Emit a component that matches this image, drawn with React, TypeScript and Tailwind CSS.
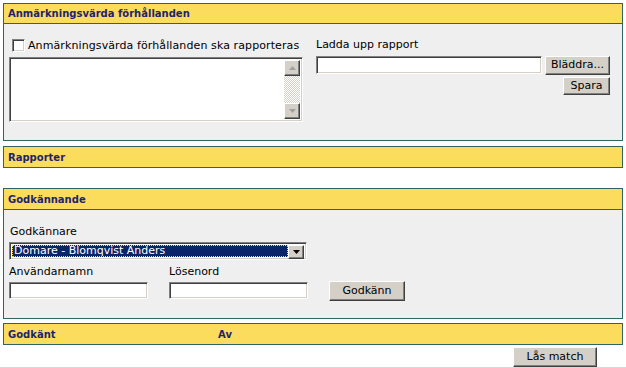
import React from "react";

const font = { fontFamily: '"DejaVu Sans", Verdana, sans-serif' };

function Header({ children, h = "h-[20px]" }: { children: React.ReactNode; h?: string }) {
  return (
    <div className={h + " bg-[#fcdc5c] flex items-center pl-[4px] text-[10px] font-bold text-[#1c2470]"}>
      {children}
    </div>
  );
}

function Btn({ children, className = "" }: { children: React.ReactNode; className?: string }) {
  return (
    <div
      className={
        "bg-[#d4d0c8] border border-t-white border-l-white border-r-[#404040] border-b-[#404040] shadow-[inset_-1px_-1px_0_#808080] flex items-center justify-center text-[11px] text-black " +
        className
      }
    >
      {children}
    </div>
  );
}

function Input({ className = "" }: { className?: string }) {
  return (
    <div
      className={
        "bg-white border border-t-[#808080] border-l-[#808080] border-r-white border-b-white shadow-[inset_1px_1px_0_#404040,inset_-1px_-1px_0_#d4d0c8] " +
        className
      }
    />
  );
}

function ArrowBtn({ up }: { up: boolean }) {
  return (
    <div className="w-[16px] h-[16px] bg-[#d4d0c8] border border-t-white border-l-white border-r-[#404040] border-b-[#404040] shadow-[inset_-1px_-1px_0_#808080] flex items-center justify-center">
      <svg width="7" height="4" viewBox="0 0 7 4">
        {up ? <path d="M3.5 0 L7 4 L0 4 Z" fill="#a0a0a0" /> : <path d="M0 0 L7 0 L3.5 4 Z" fill="#a0a0a0" />}
      </svg>
    </div>
  );
}

export default function App() {
  return (
    <div className="w-[626px] h-[368px] bg-white text-black overflow-hidden" style={font}>
      <div className="px-[3px] pt-[3px]">
        {/* Section 1 */}
        <div className="border border-[#2f6464] bg-[#efefef]">
          <div className="border-b border-[#2f6464]">
            <Header h="h-[19px]">Anmärkningsvärda förhållanden</Header>
          </div>
          <div className="h-[116px] flex pl-[5px] pt-[15px]">
            <div className="w-[294px] flex flex-col">
              <div className="flex items-center h-[13px] pl-[3px] gap-[3px]">
                <div className="w-[13px] h-[13px] bg-white border border-t-[#808080] border-l-[#808080] border-r-white border-b-white shadow-[inset_1px_1px_0_#404040,inset_-1px_-1px_0_#d4d0c8]" />
                <span className="text-[11px] leading-[13px] tracking-[0.1px]">Anmärkningsvärda förhållanden ska rapporteras</span>
              </div>
              <div className="mt-[5px] h-[65px] bg-white border border-t-[#808080] border-l-[#808080] border-r-white border-b-white shadow-[inset_1px_1px_0_#404040,inset_-1px_-1px_0_#d4d0c8] flex justify-end p-[2px]">
                <div className="w-[16px] flex flex-col justify-between bg-[repeating-conic-gradient(#d4d0c8_0_25%,#ffffff_0_50%)] bg-[length:2px_2px]">
                  <ArrowBtn up />
                  <ArrowBtn up={false} />
                </div>
              </div>
            </div>
            <div className="ml-[13px] w-[294px] flex flex-col">
              <div className="text-[11px] leading-[13px] h-[13px] -mt-[1px]">Ladda upp rapport</div>
              <div className="mt-[5px] flex gap-[3px]">
                <Input className="w-[226px] h-[18px]" />
                <Btn className="w-[65px] h-[19px]">Bläddra...</Btn>
              </div>
              <div className="flex justify-end mt-[2px]">
                <Btn className="w-[47px] h-[18px]">Spara</Btn>
              </div>
            </div>
          </div>
        </div>

        {/* Rapporter */}
        <div className="mt-[5px] border border-[#2f6464]">
          <Header>Rapporter</Header>
        </div>

        {/* Godkännande */}
        <div className="mt-[20px] border border-[#2f6464] bg-[#efefef]">
          <div className="border-b border-[#2f6464]">
            <Header>Godkännande</Header>
          </div>
          <div className="h-[108px] pl-[5px] pt-[15px] flex flex-col">
            <div className="text-[11px] leading-[13px] pl-[1px]">Godkännare</div>
            <div className="mt-[4px] w-[298px] h-[18px] bg-white border border-t-[#808080] border-l-[#808080] border-r-white border-b-white shadow-[inset_1px_1px_0_#404040,inset_-1px_-1px_0_#d4d0c8] flex p-[2px]">
              <div className="flex-1 bg-[#0a246a] text-white text-[11px] leading-[12px] pl-[2px] outline-1 outline-dotted outline-[#fcdc5c] -outline-offset-1 flex items-center">
                Domare - Blomqvist Anders
              </div>
              <div className="w-[16px] h-[14px] bg-[#d4d0c8] border border-t-white border-l-white border-r-[#404040] border-b-[#404040] shadow-[inset_-1px_-1px_0_#808080] flex items-center justify-center">
                <svg width="7" height="4" viewBox="0 0 7 4">
                  <path d="M0 0 L7 0 L3.5 4 Z" fill="#000" />
                </svg>
              </div>
            </div>
            <div className="flex mt-[5px]">
              <div className="w-[160px] flex flex-col">
                <div className="text-[11px] leading-[13px]">Användarnamn</div>
                <Input className="mt-[4px] w-[139px] h-[17px]" />
              </div>
              <div className="w-[160px] flex flex-col">
                <div className="text-[11px] leading-[13px]">Lösenord</div>
                <Input className="mt-[4px] w-[139px] h-[17px]" />
              </div>
              <div className="flex items-end">
                <Btn className="w-[76px] h-[20px] -mb-[2px]">Godkänn</Btn>
              </div>
            </div>
          </div>
        </div>

        {/* Godkänt */}
        <div className="mt-[4px] border border-[#2f6464]">
          <div className="h-[20px] bg-[#fcdc5c] flex items-center pl-[4px] text-[10px] font-bold text-[#1c2470]">
            <span className="w-[210px]">Godkänt</span>
            <span>Av</span>
          </div>
        </div>

        <div className="flex justify-end pr-[26px] mt-[2px]">
          <Btn className="w-[84px] h-[20px]">Lås match</Btn>
        </div>
      </div>
      <div className="h-[1px] bg-[#d8d8d8]" />
    </div>
  );
}
